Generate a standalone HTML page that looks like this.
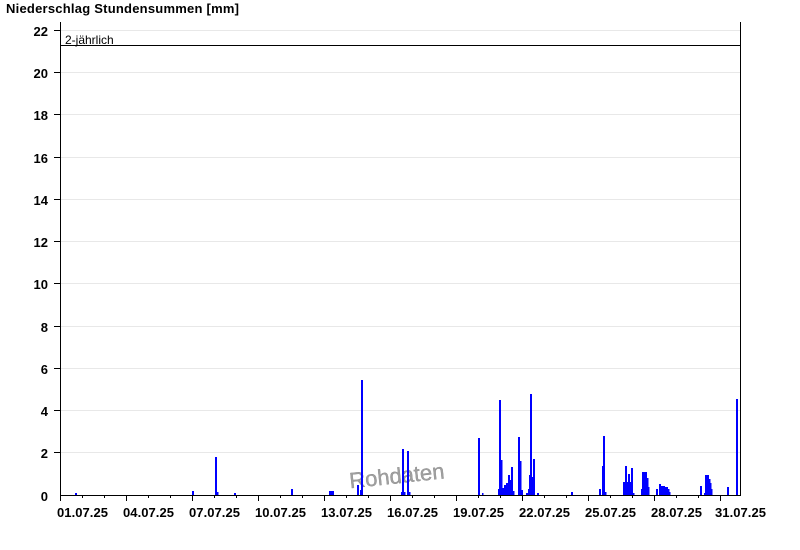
<!DOCTYPE html>
<html><head><meta charset="utf-8"><style>
html,body{margin:0;padding:0;background:#fff;width:800px;height:550px;overflow:hidden}
svg{display:block}
text{font-family:"Liberation Sans",Arial,sans-serif}
</style></head><body>
<svg width="800" height="550" viewBox="0 0 800 550" xmlns="http://www.w3.org/2000/svg">
<text x="6" y="13" font-size="13" font-weight="bold" fill="#000" textLength="233">Niederschlag Stundensummen [mm]</text>
<g stroke="#e8e8e8" stroke-width="1">
<line x1="61" x2="740" y1="30.5" y2="30.5"/>
<line x1="61" x2="740" y1="72.5" y2="72.5"/>
<line x1="61" x2="740" y1="114.5" y2="114.5"/>
<line x1="61" x2="740" y1="157.5" y2="157.5"/>
<line x1="61" x2="740" y1="199.5" y2="199.5"/>
<line x1="61" x2="740" y1="241.5" y2="241.5"/>
<line x1="61" x2="740" y1="283.5" y2="283.5"/>
<line x1="61" x2="740" y1="326.5" y2="326.5"/>
<line x1="61" x2="740" y1="368.5" y2="368.5"/>
<line x1="61" x2="740" y1="410.5" y2="410.5"/>
<line x1="61" x2="740" y1="452.5" y2="452.5"/>
</g>
<g font-size="13" font-weight="bold" text-anchor="end" fill="#000">
<text x="48" y="36">22</text><text x="48" y="78">20</text><text x="48" y="120">18</text>
<text x="48" y="163">16</text><text x="48" y="205">14</text><text x="48" y="247">12</text>
<text x="48" y="289">10</text><text x="48" y="332">8</text><text x="48" y="374">6</text>
<text x="48" y="416">4</text><text x="48" y="458">2</text><text x="48" y="501">0</text>
</g>
<g stroke="#000" stroke-width="1">
<line x1="54" x2="61" y1="30.5" y2="30.5"/><line x1="54" x2="61" y1="72.5" y2="72.5"/>
<line x1="54" x2="61" y1="114.5" y2="114.5"/><line x1="54" x2="61" y1="157.5" y2="157.5"/>
<line x1="54" x2="61" y1="199.5" y2="199.5"/><line x1="54" x2="61" y1="241.5" y2="241.5"/>
<line x1="54" x2="61" y1="283.5" y2="283.5"/><line x1="54" x2="61" y1="326.5" y2="326.5"/>
<line x1="54" x2="61" y1="368.5" y2="368.5"/><line x1="54" x2="61" y1="410.5" y2="410.5"/>
<line x1="54" x2="61" y1="452.5" y2="452.5"/>
</g>
<line x1="61" x2="740" y1="45.5" y2="45.5" stroke="#000"/>
<text x="65" y="44" font-size="12" fill="#000">2-jährlich</text>
<text x="349" y="483" font-size="22" fill="#a0a0a0" stroke="#808080" stroke-width="0.3" transform="rotate(-6 400 475)">Rohdaten</text>
<g fill="#0000ff">
<rect x="75" y="493" width="2" height="2"/>
<rect x="192" y="491" width="2" height="4"/>
<rect x="215" y="457" width="2" height="38"/><rect x="217" y="492" width="1.5" height="3"/>
<rect x="234" y="493" width="2" height="2"/>
<rect x="291" y="489" width="2" height="6"/>
<rect x="329" y="491" width="5" height="4"/>
<rect x="357" y="485" width="2" height="10"/><rect x="360" y="490" width="1.5" height="5"/>
<rect x="361" y="380" width="2" height="115"/>
<rect x="401" y="492" width="2" height="3"/><rect x="402" y="449" width="2" height="46"/><rect x="404" y="492" width="1.5" height="3"/>
<rect x="407" y="451" width="2" height="44"/><rect x="409" y="492" width="1.5" height="3"/>
<rect x="478" y="438" width="2" height="57"/><rect x="482" y="493" width="1.5" height="2"/>
<rect x="498" y="489" width="1.5" height="6"/><rect x="499" y="400" width="2" height="95"/><rect x="501" y="460" width="1.5" height="35"/>
<rect x="502" y="488" width="2" height="7"/><rect x="504" y="485" width="2" height="10"/><rect x="506" y="483" width="2" height="12"/>
<rect x="508" y="475" width="2" height="20"/><rect x="510" y="480" width="1.5" height="15"/><rect x="511" y="467" width="2" height="28"/><rect x="513" y="491" width="1.5" height="4"/>
<rect x="518" y="437" width="2" height="58"/><rect x="520" y="461" width="1.5" height="34"/><rect x="521" y="490" width="2" height="5"/>
<rect x="526" y="493" width="2" height="2"/><rect x="528" y="489" width="1.5" height="6"/><rect x="529" y="475" width="1.5" height="20"/>
<rect x="530" y="394" width="2" height="101"/><rect x="532" y="477" width="1.5" height="18"/><rect x="533" y="459" width="2" height="36"/>
<rect x="537" y="493" width="2" height="2"/>
<rect x="571" y="492" width="2" height="3"/>
<rect x="599" y="489" width="2" height="6"/><rect x="602" y="466" width="1.5" height="29"/><rect x="603" y="436" width="2" height="59"/><rect x="605" y="492" width="1.5" height="3"/>
<rect x="623" y="482" width="2" height="13"/><rect x="625" y="466" width="2" height="29"/><rect x="627" y="482" width="1.5" height="13"/>
<rect x="628" y="474" width="2" height="21"/><rect x="630" y="482" width="1.5" height="13"/><rect x="631" y="468" width="2" height="27"/><rect x="633" y="493" width="1.5" height="2"/>
<rect x="641" y="489" width="2" height="6"/><rect x="642" y="472" width="5" height="23"/><rect x="647" y="478" width="1.5" height="17"/><rect x="648" y="487" width="1.5" height="8"/>
<rect x="656" y="489" width="2" height="6"/><rect x="659" y="484" width="2" height="11"/><rect x="661" y="486" width="4" height="9"/>
<rect x="665" y="487" width="3" height="8"/><rect x="668" y="489" width="1.5" height="6"/><rect x="669" y="492" width="1.5" height="3"/>
<rect x="700" y="486" width="2" height="9"/><rect x="704" y="493" width="1.5" height="2"/><rect x="705" y="475" width="4" height="20"/>
<rect x="709" y="479" width="1.5" height="16"/><rect x="710" y="483" width="1.5" height="12"/><rect x="711" y="489" width="1.5" height="6"/>
<rect x="727" y="487" width="2" height="8"/>
<rect x="736" y="399" width="2" height="96"/>
</g>
<g stroke="#000" stroke-width="1">
<line x1="60.5" x2="60.5" y1="22" y2="496"/>
<line x1="740.5" x2="740.5" y1="22" y2="496"/>
<line x1="60" x2="741" y1="495.5" y2="495.5"/>
</g>
<g stroke="#000" stroke-width="1">
<path d="M60.5 495v6M126.5 495v6M192.5 495v6M258.5 495v6M324.5 495v6M390.5 495v6M456.5 495v6M522.5 495v6M588.5 495v6M654.5 495v6M720.5 495v6"/>
<path d="M82.5 495v3M104.5 495v3M148.5 495v3M170.5 495v3M214.5 495v3M236.5 495v3M280.5 495v3M302.5 495v3M346.5 495v3M368.5 495v3M412.5 495v3M434.5 495v3M478.5 495v3M500.5 495v3M544.5 495v3M566.5 495v3M610.5 495v3M632.5 495v3M676.5 495v3M698.5 495v3"/>
</g>
<g font-size="13" font-weight="bold" fill="#000">
<text x="57" y="517" textLength="51">01.07.25</text><text x="123" y="517" textLength="51">04.07.25</text><text x="189" y="517" textLength="51">07.07.25</text>
<text x="255" y="517" textLength="51">10.07.25</text><text x="321" y="517" textLength="51">13.07.25</text><text x="387" y="517" textLength="51">16.07.25</text>
<text x="453" y="517" textLength="51">19.07.25</text><text x="519" y="517" textLength="51">22.07.25</text><text x="585" y="517" textLength="51">25.07.25</text>
<text x="651" y="517" textLength="51">28.07.25</text><text x="715" y="517" textLength="51">31.07.25</text>
</g>
</svg>
</body></html>
